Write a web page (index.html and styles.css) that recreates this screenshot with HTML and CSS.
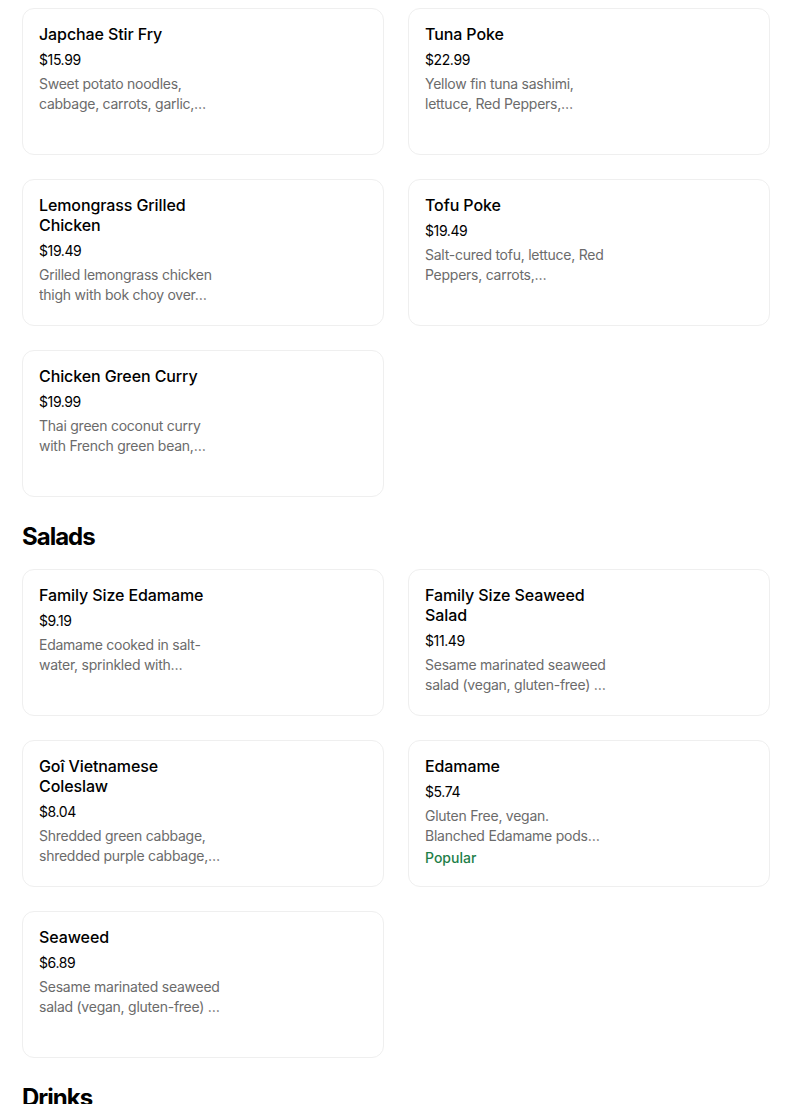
FILE: index.html
```html
<!DOCTYPE html>
<html>
<head>
<meta charset="utf-8">
<link rel="stylesheet" href="styles.css">
</head>
<body>
<div class="page">
  <div class="grid">
    <div class="card"><div class="info"><div class="title">Japchae Stir Fry</div><div class="price">$15.99</div><div class="desc">Sweet potato noodles, cabbage, carrots, garlic,…</div></div></div>
    <div class="card"><div class="info"><div class="title">Tuna Poke</div><div class="price">$22.99</div><div class="desc">Yellow fin tuna sashimi, lettuce, Red Peppers,…</div></div></div>
    <div class="card"><div class="info"><div class="title">Lemongrass Grilled Chicken</div><div class="price">$19.49</div><div class="desc">Grilled lemongrass chicken thigh with bok choy over…</div></div></div>
    <div class="card"><div class="info"><div class="title">Tofu Poke</div><div class="price">$19.49</div><div class="desc">Salt-cured tofu, lettuce, Red Peppers, carrots,…</div></div></div>
    <div class="card"><div class="info"><div class="title">Chicken Green Curry</div><div class="price">$19.99</div><div class="desc">Thai green coconut curry with French green bean,…</div></div></div>
  </div>
  <h2 class="section">Salads</h2>
  <div class="grid">
    <div class="card"><div class="info"><div class="title">Family Size Edamame</div><div class="price">$9.19</div><div class="desc">Edamame cooked in salt-water, sprinkled with…</div></div></div>
    <div class="card"><div class="info"><div class="title">Family Size Seaweed Salad</div><div class="price">$11.49</div><div class="desc">Sesame marinated seaweed salad (vegan, gluten-free) …</div></div></div>
    <div class="card"><div class="info"><div class="title">Goî Vietnamese Coleslaw</div><div class="price">$8.04</div><div class="desc">Shredded green cabbage, shredded purple cabbage,…</div></div></div>
    <div class="card"><div class="info"><div class="title">Edamame</div><div class="price">$5.74</div><div class="desc">Gluten Free, vegan. Blanched Edamame pods…</div><div class="tag">Popular</div></div></div>
    <div class="card"><div class="info"><div class="title">Seaweed</div><div class="price">$6.89</div><div class="desc">Sesame marinated seaweed salad (vegan, gluten-free) …</div></div></div>
  </div>
  <h2 class="section">Drinks</h2>
</div>
</body>
</html>
```
FILE: styles.css
```css
* { box-sizing: border-box; }
html, body { margin: 0; padding: 0; background: #fff; }
body { font-family: Inter, "Noto Sans", sans-serif; color: #000; }
.page { padding: 8px 0 0 22px; width: 770px; }
.grid { display: grid; grid-template-columns: 1fr 1fr; column-gap: 24px; row-gap: 24px; }
.card { height: 147px; border: 1px solid #efefef; border-radius: 12px; padding: 15px 16px; }
.info { width: 184px; }
.title { font-size: 16px; font-weight: 500; line-height: 20px; letter-spacing: -0.1px; }
.price { font-size: 14px; line-height: 20px; margin-top: 6px; letter-spacing: -0.4px; }
.desc { font-size: 14px; line-height: 20px; color: #6b6b6b; margin-top: 4px; letter-spacing: -0.25px; display: -webkit-box; -webkit-line-clamp: 2; -webkit-box-orient: vertical; overflow: hidden; }
.tag { font-size: 14px; line-height: 20px; font-weight: 500; color: #1e8049; margin-top: 2px; }
.section { font-size: 24px; line-height: 32px; font-weight: 700; margin: 24px 0 16px; letter-spacing: -1px; }
```
